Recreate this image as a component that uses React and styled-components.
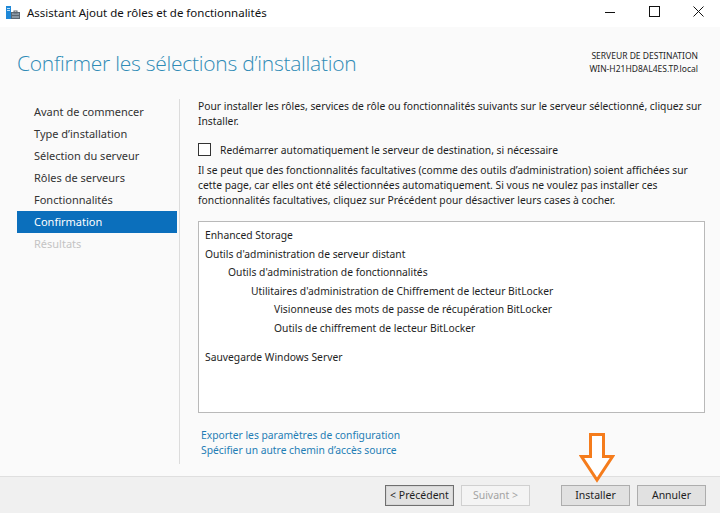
import React from 'react';
import styled, { createGlobalStyle } from 'styled-components';

const GlobalStyle = createGlobalStyle`
  html, body {
    margin: 0;
    padding: 0;
    width: 100%;
    height: 100%;
    overflow: hidden;
    background: #fafafa;
  }
  body {
    font-family: "Noto Sans", "Open Sans", sans-serif;
    color: #1e1e1e;
  }
`;

const navItems = [
  { label: 'Avant de commencer' },
  { label: "Type d’installation" },
  { label: 'Sélection du serveur' },
  { label: 'Rôles de serveurs' },
  { label: 'Fonctionnalités' },
  { label: 'Confirmation', active: true },
  { label: 'Résultats', disabled: true },
];

const features = [
  { label: 'Enhanced Storage', level: 0 },
  { label: "Outils d'administration de serveur distant", level: 0 },
  { label: "Outils d'administration de fonctionnalités", level: 1 },
  { label: "Utilitaires d'administration de Chiffrement de lecteur BitLocker", level: 2 },
  { label: 'Visionneuse des mots de passe de récupération BitLocker', level: 3 },
  { label: 'Outils de chiffrement de lecteur BitLocker', level: 3 },
  { label: 'Sauvegarde Windows Server', level: 0, gap: true },
];

function AppIcon() {
  return (
    <svg width="14" height="14" viewBox="0 0 14 14">
      <rect x="0" y="0" width="5" height="13" fill="#1e88d8" />
      <rect x="1" y="2" width="3" height="1" fill="#bfe0f8" />
      <rect x="1" y="4" width="3" height="1" fill="#bfe0f8" />
      <rect x="5.5" y="6.5" width="8" height="6" fill="#8a97a3" stroke="#5c6670" />
      <rect x="8" y="5" width="3" height="2" fill="none" stroke="#5c6670" />
      <rect x="6" y="9" width="7" height="1" fill="#5c6670" />
    </svg>
  );
}

export default function App() {
  return (
    <>
      <GlobalStyle />
      <Styled.Window>
        <Styled.TitleBar>
          <Styled.TitleLeft>
            <AppIcon />
            <Styled.TitleText>Assistant Ajout de rôles et de fonctionnalités</Styled.TitleText>
          </Styled.TitleLeft>
          <Styled.Controls>
            <Styled.Control>
              <svg width="10" height="10" viewBox="0 0 10 10">
                <line x1="0" y1="5.5" x2="10" y2="5.5" stroke="#111" strokeWidth="1" />
              </svg>
            </Styled.Control>
            <Styled.Control>
              <svg width="11" height="11" viewBox="0 0 11 11">
                <rect x="0.5" y="0.5" width="10" height="10" fill="none" stroke="#111" strokeWidth="1" />
              </svg>
            </Styled.Control>
            <Styled.Control>
              <svg width="11" height="11" viewBox="0 0 11 11">
                <path d="M0.5 0.5 L10.5 10.5 M10.5 0.5 L0.5 10.5" stroke="#111" strokeWidth="1" />
              </svg>
            </Styled.Control>
          </Styled.Controls>
        </Styled.TitleBar>

        <Styled.Header>
          <Styled.Heading>Confirmer les sélections d’installation</Styled.Heading>
          <Styled.Destination>
            <div>SERVEUR DE DESTINATION</div>
            <div>WIN-H21HD8AL4ES.TP.local</div>
          </Styled.Destination>
        </Styled.Header>

        <Styled.Body>
          <Styled.Nav>
            {navItems.map(item => (
              <Styled.NavItem key={item.label} $active={item.active} $disabled={item.disabled}>
                {item.label}
              </Styled.NavItem>
            ))}
          </Styled.Nav>

          <Styled.Content>
            <Styled.Paragraph>
              Pour installer les rôles, services de rôle ou fonctionnalités suivants sur le serveur sélectionné, cliquez sur
              <br />
              Installer.
            </Styled.Paragraph>

            <Styled.CheckRow>
              <Styled.Checkbox />
              <span>Redémarrer automatiquement le serveur de destination, si nécessaire</span>
            </Styled.CheckRow>

            <Styled.Paragraph>
              Il se peut que des fonctionnalités facultatives (comme des outils d’administration) soient affichées sur
              <br />
              cette page, car elles ont été sélectionnées automatiquement. Si vous ne voulez pas installer ces
              <br />
              fonctionnalités facultatives, cliquez sur Précédent pour désactiver leurs cases à cocher.
            </Styled.Paragraph>

            <Styled.FeatureBox>
              {features.map(f => (
                <Styled.FeatureRow key={f.label} $level={f.level} $gap={f.gap}>
                  {f.label}
                </Styled.FeatureRow>
              ))}
            </Styled.FeatureBox>

            <Styled.Links>
              <Styled.Link href="#">Exporter les paramètres de configuration</Styled.Link>
              <Styled.Link href="#">Spécifier un autre chemin d’accès source</Styled.Link>
            </Styled.Links>
          </Styled.Content>
        </Styled.Body>

        <Styled.Footer>
          <Styled.ButtonGroup>
            <Styled.Button $focused>&lt; Précédent</Styled.Button>
            <Styled.Button disabled>Suivant &gt;</Styled.Button>
          </Styled.ButtonGroup>
          <Styled.ButtonGroup>
            <Styled.Button>Installer</Styled.Button>
            <Styled.Button>Annuler</Styled.Button>
          </Styled.ButtonGroup>

          <Styled.Arrow width="36" height="50" viewBox="0 0 36 50">
            <path
              d="M11.5 1.5 H24.5 V23.5 H33.5 L18 47 L2.5 23.5 H11.5 Z"
              fill="#ffffff"
              stroke="#f57c1c"
              strokeWidth="3"
              strokeLinejoin="miter"
            />
          </Styled.Arrow>
        </Styled.Footer>
      </Styled.Window>
    </>
  );
}

const Styled = {};

Styled.Window = styled.div`
  width: 720px;
  height: 513px;
  display: flex;
  flex-direction: column;
  background: #fafafa;
`;

Styled.TitleBar = styled.div`
  height: 27px;
  flex: none;
  background: #ffffff;
  display: flex;
  align-items: center;
  justify-content: space-between;
  padding-left: 6px;
`;

Styled.TitleLeft = styled.div`
  display: flex;
  align-items: center;
  gap: 7px;
  margin-top: -2px;
`;

Styled.TitleText = styled.span`
  font-size: 11.5px;
  color: #111;
`;

Styled.Controls = styled.div`
  display: flex;
  height: 100%;
`;

Styled.Control = styled.div`
  width: 44px;
  height: 100%;
  display: flex;
  align-items: center;
  justify-content: center;
  margin-top: -2px;
`;

Styled.Header = styled.div`
  height: 72px;
  flex: none;
  display: flex;
  justify-content: space-between;
  align-items: flex-start;
  padding: 0 22px 0 17px;
`;

Styled.Heading = styled.h1`
  margin: 22px 0 0;
  font-family: "Open Sans", "Noto Sans", sans-serif;
  font-weight: 300;
  font-size: 21px;
  letter-spacing: -0.25px;
  color: #2f8bb6;
`;

Styled.Destination = styled.div`
  margin-top: 22px;
  text-align: right;
  font-size: 8.5px;
  line-height: 13px;
  color: #1e1e1e;
`;

Styled.Body = styled.div`
  flex: 1;
  display: flex;
  min-height: 0;
`;

Styled.Nav = styled.div`
  width: 160px;
  flex: none;
  margin-left: 17px;
  padding-top: 2px;
  border-right: 1px solid #dcdcdc;
  margin-bottom: 12px;
  padding-right: 2px;
`;

Styled.NavItem = styled.div`
  height: 22px;
  line-height: 22px;
  padding-left: 17px;
  font-size: 11px;
  color: ${p => (p.$active ? '#ffffff' : p.$disabled ? '#c4c4c4' : '#333333')};
  background: ${p => (p.$active ? '#0b6fbc' : 'transparent')};
`;

Styled.Content = styled.div`
  flex: 1;
  padding: 0 15px 0 18px;
  font-size: 10.3px;
`;

Styled.Paragraph = styled.p`
  margin: 0;
  line-height: 15px;
  white-space: nowrap;
`;

Styled.CheckRow = styled.label`
  display: flex;
  align-items: center;
  gap: 9px;
  margin: 13px 0 6px;
  height: 15px;
`;

Styled.Checkbox = styled.span`
  width: 11px;
  height: 11px;
  border: 1px solid #333;
  background: #fff;
  flex: none;
`;

Styled.FeatureBox = styled.div`
  margin-top: 13px;
  height: 192px;
  border: 1px solid #b9b9b9;
  background: #ffffff;
  padding: 4px 6px;
  box-sizing: border-box;
`;

Styled.FeatureRow = styled.div`
  line-height: 18.5px;
  padding-left: ${p => p.$level * 23}px;
  margin-top: ${p => (p.$gap ? 11 : 0)}px;
  white-space: nowrap;
`;

Styled.Links = styled.div`
  margin-top: 15px;
  padding-left: 3px;
  display: flex;
  flex-direction: column;
`;

Styled.Link = styled.a`
  color: #1f7db5;
  text-decoration: none;
  line-height: 15px;
`;

Styled.Footer = styled.div`
  position: relative;
  height: 37px;
  flex: none;
  background: #f0f0f0;
  border-top: 1px solid #dfdfdf;
  box-sizing: border-box;
  display: flex;
  justify-content: flex-end;
  align-items: center;
  gap: 31px;
  padding-right: 14px;
`;

Styled.ButtonGroup = styled.div`
  display: flex;
  gap: 7px;
`;

Styled.Button = styled.button`
  width: 69px;
  height: 21px;
  padding: 0;
  font-family: "Noto Sans", "Open Sans", sans-serif;
  font-size: 10.5px;
  color: ${p => (p.disabled ? '#a3a3a3' : '#1e1e1e')};
  background: ${p => (p.disabled ? '#f4f4f4' : '#e1e1e1')};
  border: 1px solid ${p => (p.disabled ? '#d0d0d0' : p.$focused ? '#6f6f6f' : '#adadad')};
  box-shadow: ${p => (p.$focused ? 'inset 0 0 0 1px #d6d6d6' : 'none')};
`;

Styled.Arrow = styled.svg`
  position: absolute;
  left: 579px;
  top: -44px;
`;
